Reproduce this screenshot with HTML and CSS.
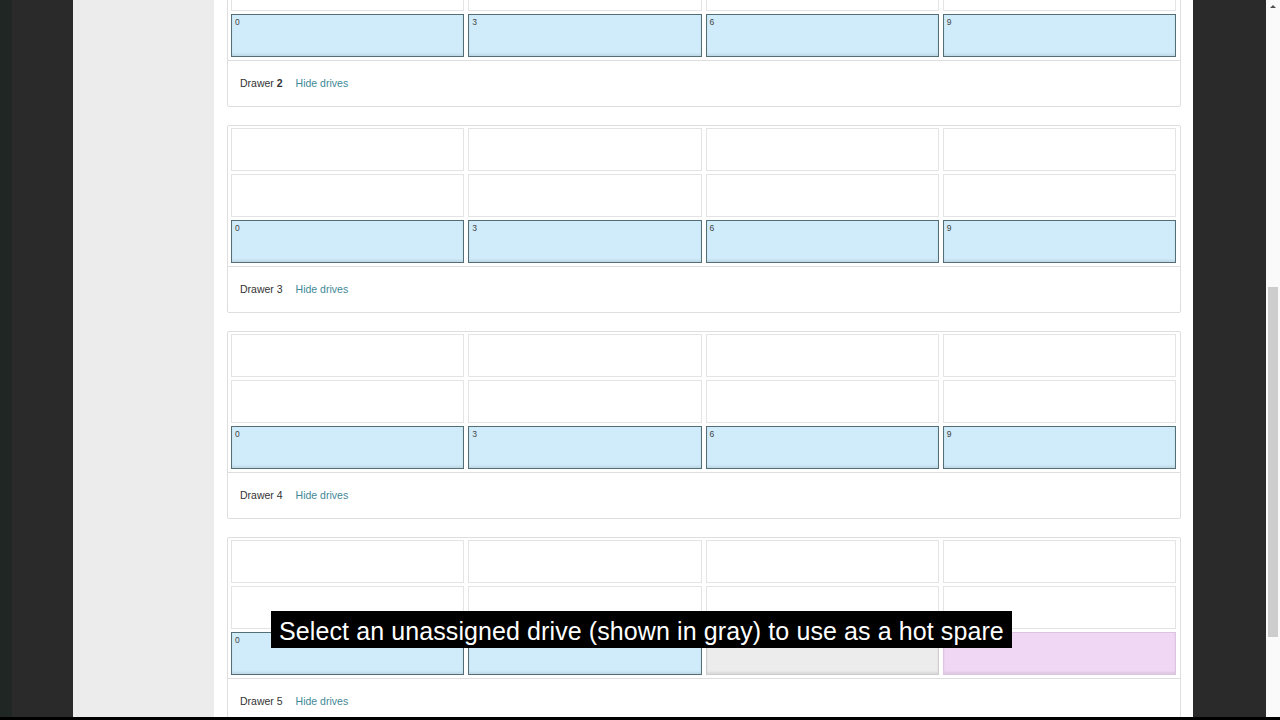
FILE: index.html
```html
<!DOCTYPE html>
<html>
	<head>
		<meta charset='utf-8'>
		<meta name='viewport' content='width=device-width, initial-scale=1'>
		<title>Storage Enclosure</title>
		<link rel="stylesheet" href="styles.css">
	</head>
	<body>
		<div class='screen'>
			<div class='bezel bezel-left'></div>
			<nav class='sidebar'></nav>
			<main class='content'>
				<div class='drawers'>
					<section class='drawer'>
						<div class='bays'>
							<div class='bay'></div><div class='bay'></div><div class='bay'></div><div class='bay'></div>
							<div class='bay'></div><div class='bay'></div><div class='bay'></div><div class='bay'></div>
							<div class='bay drive'>0</div><div class='bay drive'>3</div><div class='bay drive'>6</div><div class='bay drive'>9</div>
						</div>
						<div class='drawer-foot'>
							<span>Drawer <b>2</b></span>
							<a href='#'>Hide drives</a>
						</div>
					</section>
					<section class='drawer'>
						<div class='bays'>
							<div class='bay'></div><div class='bay'></div><div class='bay'></div><div class='bay'></div>
							<div class='bay'></div><div class='bay'></div><div class='bay'></div><div class='bay'></div>
							<div class='bay drive'>0</div><div class='bay drive'>3</div><div class='bay drive'>6</div><div class='bay drive'>9</div>
						</div>
						<div class='drawer-foot'>
							<span>Drawer 3</span>
							<a href='#'>Hide drives</a>
						</div>
					</section>
					<section class='drawer'>
						<div class='bays'>
							<div class='bay'></div><div class='bay'></div><div class='bay'></div><div class='bay'></div>
							<div class='bay'></div><div class='bay'></div><div class='bay'></div><div class='bay'></div>
							<div class='bay drive'>0</div><div class='bay drive'>3</div><div class='bay drive'>6</div><div class='bay drive'>9</div>
						</div>
						<div class='drawer-foot'>
							<span>Drawer 4</span>
							<a href='#'>Hide drives</a>
						</div>
					</section>
					<section class='drawer'>
						<div class='bays'>
							<div class='bay'></div><div class='bay'></div><div class='bay'></div><div class='bay'></div>
							<div class='bay'></div><div class='bay'></div><div class='bay'></div><div class='bay'></div>
							<div class='bay drive'>0</div><div class='bay drive'></div><div class='bay drive unassigned'></div><div class='bay drive spare'></div>
						</div>
						<div class='drawer-foot'>
							<span>Drawer 5</span>
							<a href='#'>Hide drives</a>
						</div>
					</section>
				</div>
			</main>
			<div class='bezel bezel-right'></div>
			<div class='scrollbar'>
				<span class='scroll-arrow'></span>
				<div class='scroll-thumb'></div>
			</div>
		</div>
		<div class='caption'>Select an unassigned drive (shown in gray) to use as a hot spare</div>
		<div class='bottom-strip'></div>
	</body>
</html>
```

FILE: styles.css
```css
:root {
	--bezel: rgb(42, 42, 42);
	--sidebar: rgb(236, 236, 236);
	--line: rgb(222, 222, 222);
	--bay-line: rgb(228, 228, 228);
	--drive: rgb(208, 235, 249);
	--drive-border: rgb(84, 110, 118);
	--link: rgb(64, 136, 150);
	--text: rgb(51, 51, 51);
}
html, body {
	margin: 0;
	padding: 0;
	height: 100%;
	overflow: hidden;
	font-family: "Liberation Sans", Arial, Helvetica, sans-serif;
	color: var(--text);
	background-color: #000;
}
.screen {
	display: flex;
	height: 717px;
}
.bezel {
	flex: 0 0 73px;
	background-color: var(--bezel);
}
.bezel-left {
	background: linear-gradient(to right, rgb(32, 38, 36) 0, rgb(32, 38, 36) 12px, var(--bezel) 12px);
}
.sidebar {
	flex: 0 0 141px;
	background-color: var(--sidebar);
}
.content {
	flex: 0 0 979px;
	background-color: #fff;
	overflow: hidden;
}
.drawers {
	margin-top: -81px;
	padding: 0 12px 0 13px;
}
.drawer {
	border: 1px solid var(--line);
	border-radius: 2px;
	margin-bottom: 18px;
	background-color: #fff;
}
.bays {
	display: grid;
	grid-template-columns: repeat(4, 1fr);
	grid-template-rows: repeat(3, 43px);
	gap: 3px 4px;
	padding: 2px 4px 3px 3px;
	border-bottom: 1px solid var(--line);
}
.bay {
	border: 1px solid var(--bay-line);
	background-color: #fff;
	box-sizing: border-box;
}
.drive {
	background-color: var(--drive);
	border-color: var(--drive-border);
	box-shadow: inset 0 -2px 2px rgba(0, 0, 0, 0.08);
	font-size: 8.5px;
	line-height: 10px;
	padding: 2px 3px;
	color: #444;
}
.unassigned {
	background-color: rgb(236, 236, 236);
	border-color: rgb(205, 205, 205);
}
.spare {
	background-color: rgb(240, 216, 244);
	border-color: rgb(220, 196, 226);
}
.drawer-foot {
	display: flex;
	align-items: center;
	gap: 13px;
	height: 44px;
	padding-left: 12px;
	padding-bottom: 1px;
	font-size: 10.5px;
}
.drawer-foot b {
	font-weight: 700;
}
.drawer-foot a {
	color: var(--link);
	text-decoration: none;
}
.scrollbar {
	flex: 0 0 14px;
	position: relative;
	background-color: rgb(250, 250, 250);
}
.scroll-arrow {
	position: absolute;
	top: 5px;
	left: 4px;
	border-left: 3px solid transparent;
	border-right: 3px solid transparent;
	border-bottom: 3px solid rgb(80, 80, 80);
}
.scroll-thumb {
	position: absolute;
	top: 287px;
	left: 2px;
	width: 10px;
	height: 350px;
	background-color: rgb(205, 205, 205);
}
.caption {
	position: absolute;
	left: 271px;
	top: 611px;
	height: 37px;
	line-height: 40px;
	padding: 0 8px;
	background-color: #000;
	color: #fff;
	font-size: 25px;
	letter-spacing: 0.1px;
	white-space: nowrap;
}
.bottom-strip {
	height: 3px;
	background-color: #000;
}
```
